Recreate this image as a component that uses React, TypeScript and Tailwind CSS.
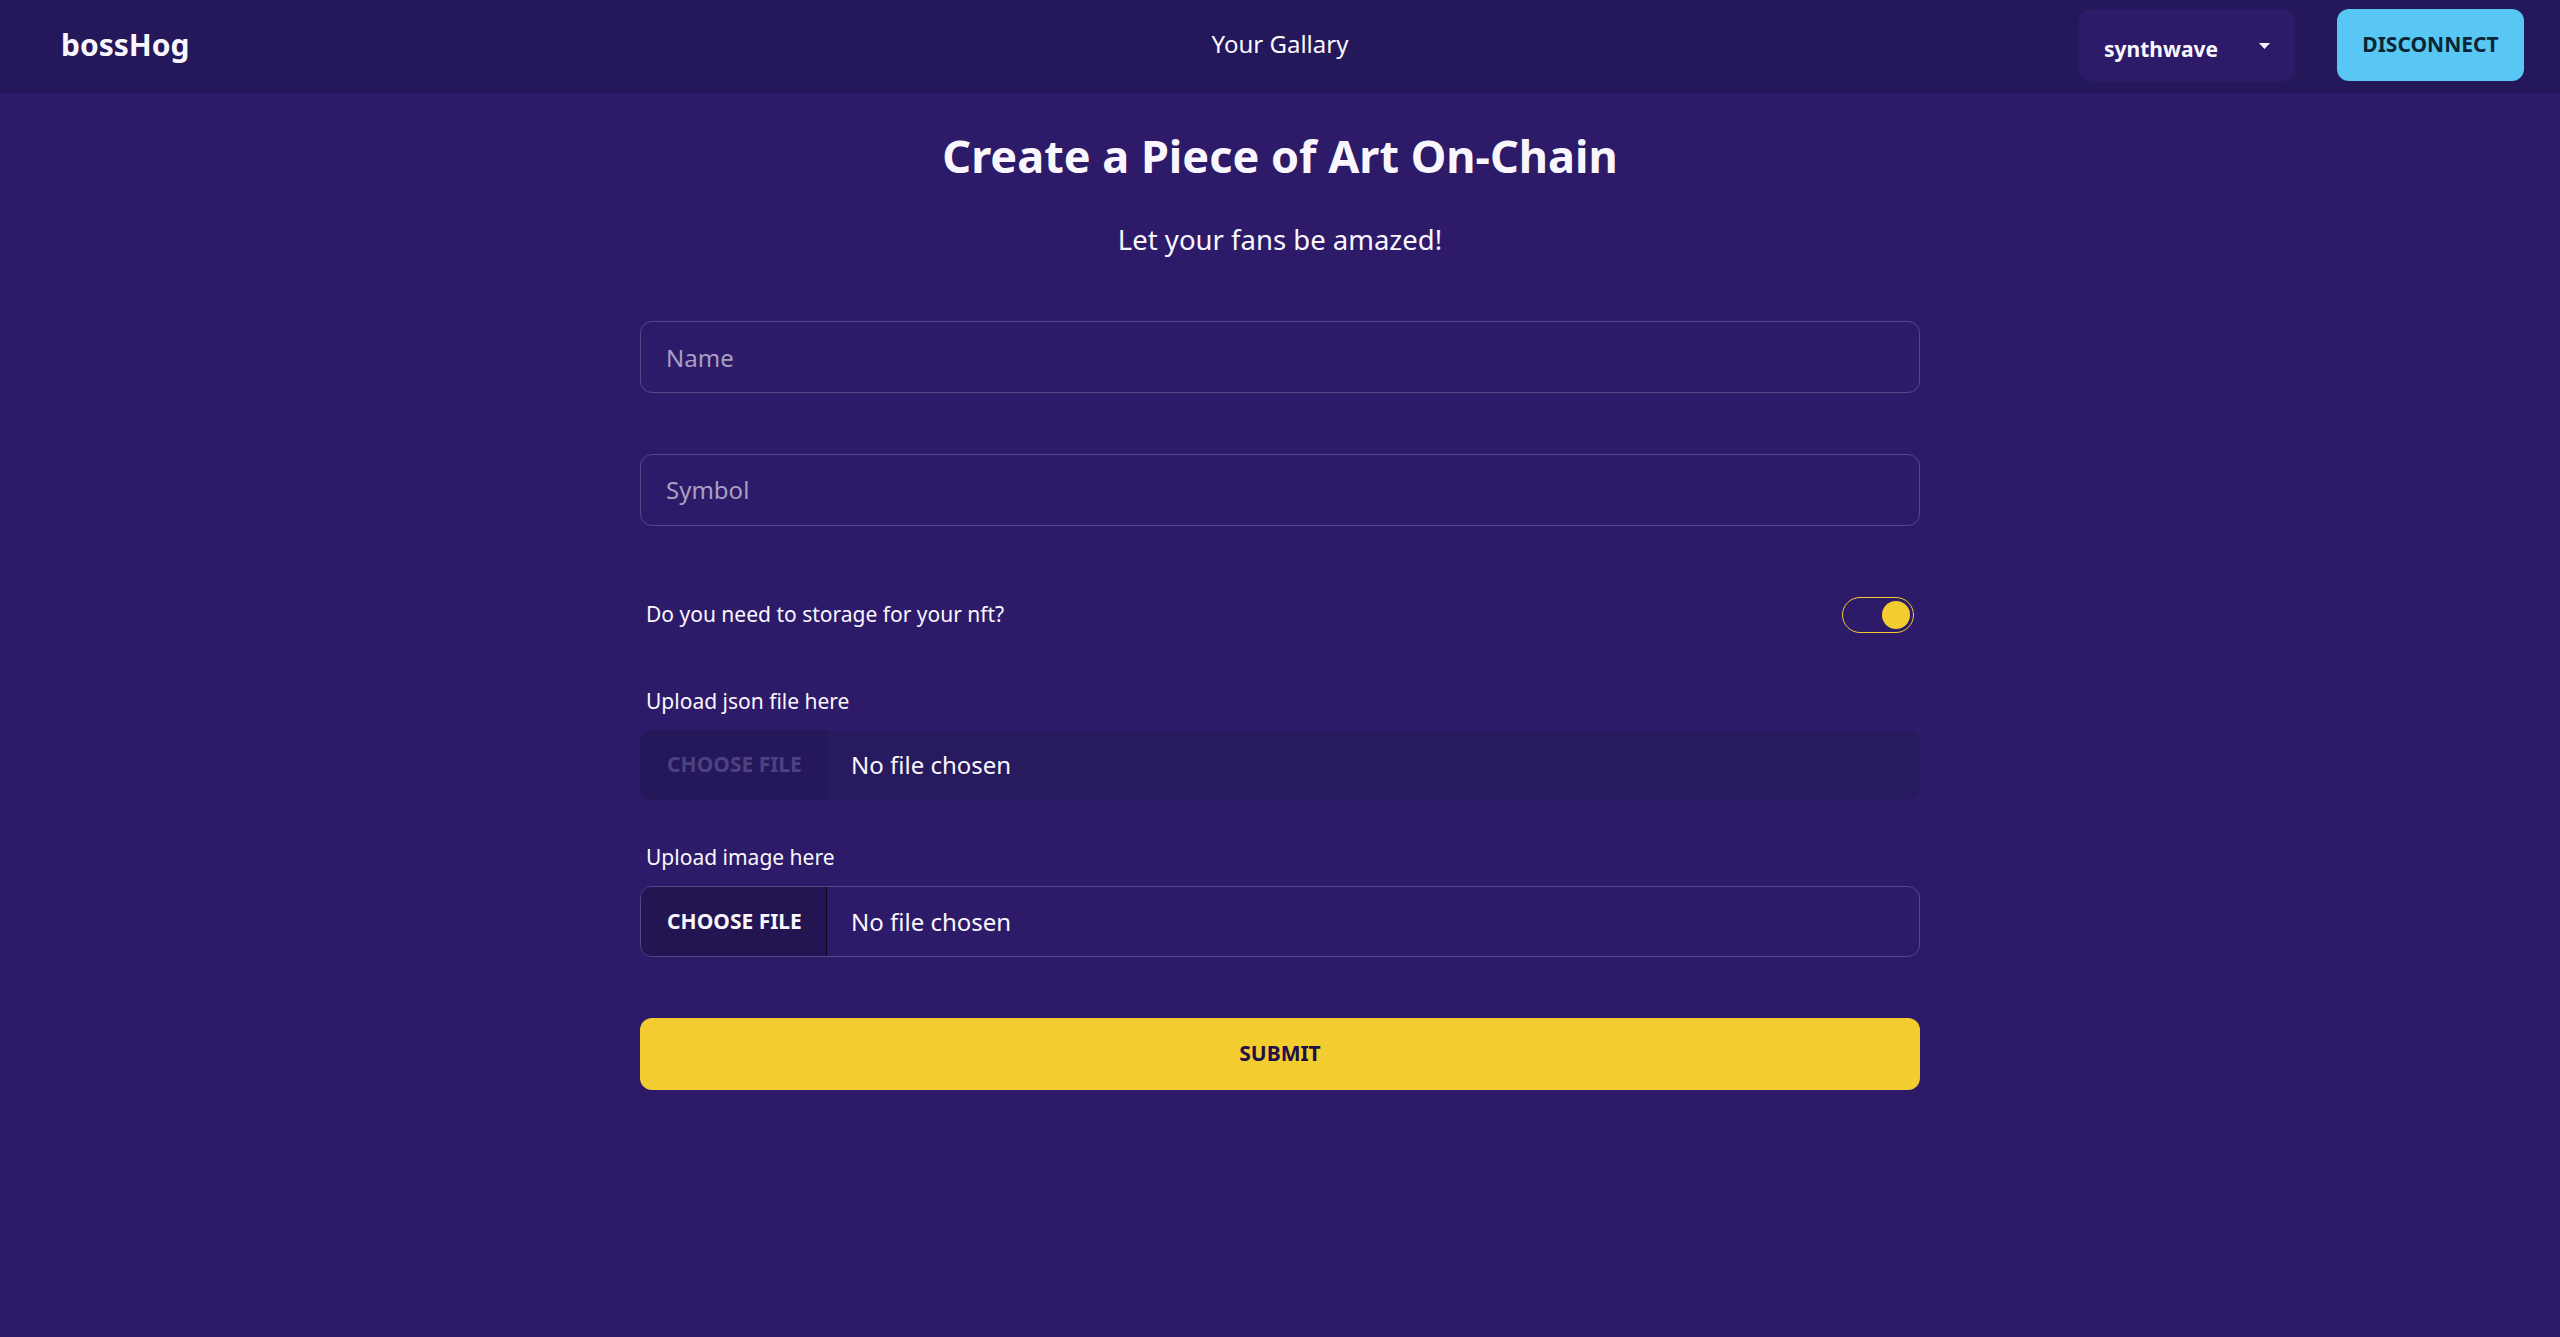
import React from "react";

const font = { fontFamily: '"Noto Sans", "Open Sans", sans-serif' };

function FileBox({ disabled }: { disabled?: boolean }) {
  if (disabled) {
    return (
      <div className="flex h-[70px] w-full items-stretch overflow-hidden rounded-[12px] bg-[#281a5e]">
        <div className="flex w-[187px] items-center justify-center bg-[#25185a] pl-[2px] text-[21px] font-bold uppercase text-[#4d4183]">
          Choose File
        </div>
        <div className="flex items-center pl-[24px] text-[24px] text-[#f9f7fd]">No file chosen</div>
      </div>
    );
  }
  return (
    <div className="flex h-[71px] w-full items-stretch overflow-hidden rounded-[12px] border-[1.5px] border-[#564787] bg-[#2d1b69]">
      <div className="flex w-[186px] items-center justify-center border-r-[1.5px] border-r-[#0d0723] bg-[#221551] pl-[2px] text-[21px] font-bold uppercase text-[#f9f7fd]">
        Choose File
      </div>
      <div className="flex items-center pl-[24px] text-[24px] text-[#f9f7fd]">No file chosen</div>
    </div>
  );
}

export default function App() {
  return (
    <div className="min-h-[1337px] w-full bg-[#2d1b69] text-[#f9f7fd]" style={font}>
      <header className="grid h-[93px] grid-cols-3 items-start bg-[#25185a] px-[36px]">
        <div className="ml-[25px] mt-[27px] text-[30px] font-bold leading-[36px] text-[#f9f7fd]">bossHog</div>
        <div className="mt-[26px] text-center text-[24px] leading-[36px] text-[#f9f7fd]">Your Gallary</div>
        <div className="mt-[9px] flex items-center justify-end gap-[42px]">
          <div className="flex h-[72px] w-[216px] items-center justify-between rounded-[12px] bg-[#2d1b69] pl-[25px] pr-[25px]">
            <span className="mt-[10px] text-[21px] font-bold">synthwave</span>
            <svg width="11" height="6" viewBox="0 0 11 6" className="mt-[2px]">
              <polygon points="0,0 11,0 5.5,6" fill="#f9f7fd" />
            </svg>
          </div>
          <button className="flex h-[72px] w-[187px] items-center justify-center rounded-[12px] bg-[#58c7f3] text-[21px] font-bold uppercase text-[#0a2636]">
            Disconnect
          </button>
        </div>
      </header>

      <main className="flex flex-col items-center pt-[36px]">
        <h1 className="text-[45px] font-bold leading-[54px]">Create a Piece of Art On-Chain</h1>
        <p className="mt-[39px] text-[27.5px] leading-[36px]">Let your fans be amazed!</p>

        <form className="mt-[63px] flex w-[1280px] flex-col">
          <div className="flex h-[72px] items-center rounded-[12px] border-[1.5px] border-[#564787] px-[25px] pt-[1px] text-[24px] text-[#a79fc2]">
            Name
          </div>
          <div className="mt-[61px] flex h-[72px] items-center rounded-[12px] border-[1.5px] border-[#564787] px-[25px] text-[24px] text-[#a79fc2]">
            Symbol
          </div>

          <div className="mt-[71px] flex h-[36px] items-center justify-between px-[6px]">
            <span className="text-[21px]">Do you need to storage for your nft?</span>
            <div className="flex h-[36px] w-[72px] items-center justify-end rounded-full border-[1.5px] border-[#f3cc30] pr-[3px]">
              <div className="h-[28px] w-[28px] rounded-full bg-[#f3cc30]" />
            </div>
          </div>

          <div className="mt-[53px] px-[6px] text-[21px] leading-[30px]">Upload json file here</div>
          <div className="mt-[14px]">
            <FileBox disabled />
          </div>

          <div className="mt-[42px] px-[6px] text-[21px] leading-[30px]">Upload image here</div>
          <div className="mt-[14px]">
            <FileBox />
          </div>

          <button
            type="button"
            className="mt-[61px] flex h-[72px] w-full items-center justify-center rounded-[12px] bg-[#f3cc30] text-[21px] font-bold uppercase text-[#201047]"
          >
            Submit
          </button>
        </form>
      </main>
    </div>
  );
}
